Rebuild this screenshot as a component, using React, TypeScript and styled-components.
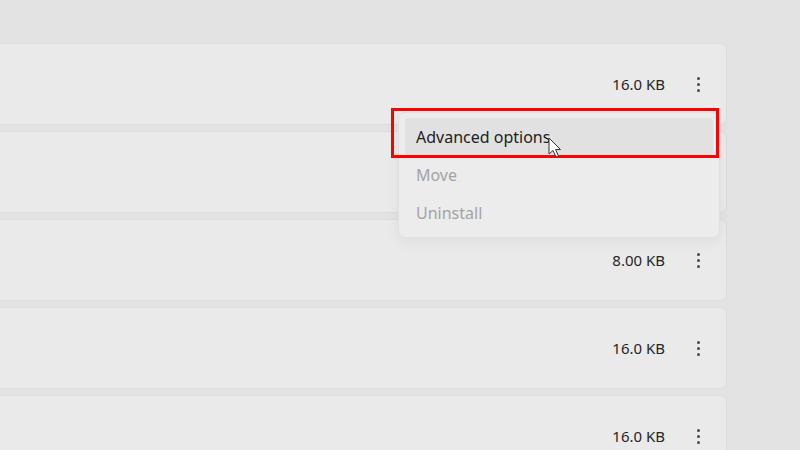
import { createGlobalStyle, styled } from 'styled-components';

const GlobalStyle = createGlobalStyle`
  html, body {
    margin: 0;
    padding: 0;
    background: #e3e3e3;
    font-family: "Noto Sans", "Open Sans", "Liberation Sans", sans-serif;
    overflow: hidden;
  }
`;

const Page = styled.div`
  position: relative;
  width: 800px;
  height: 450px;
  overflow: hidden;
`;

const List = styled.div`
  display: flex;
  flex-direction: column;
  gap: 6px;
  width: 748px;
  margin-left: -21px;
  padding-top: 43px;
`;

const Card = styled.div`
  box-sizing: border-box;
  height: 82px;
  display: flex;
  align-items: center;
  justify-content: flex-end;
  gap: 19px;
  padding-right: 14px;
  background: #eaeaea;
  border: 1px solid #dcdcdc;
  border-radius: 6px;
`;

const Size = styled.span`
  font-size: 15px;
  color: #262626;
`;

const Kebab = styled.button`
  width: 28px;
  height: 28px;
  display: flex;
  flex-direction: column;
  align-items: center;
  justify-content: center;
  gap: 3px;
  padding: 0;
  border: none;
  background: transparent;

  span {
    width: 3px;
    height: 3px;
    border-radius: 50%;
    background: #4a4a4a;
  }
`;

const Menu = styled.div`
  position: absolute;
  left: 398px;
  top: 112px;
  width: 322px;
  box-sizing: border-box;
  padding: 5px 6px;
  background: #ececec;
  border: 1px solid #e0e0e0;
  border-radius: 7px;
  box-shadow: 0 4px 14px rgba(0, 0, 0, 0.06);
  display: flex;
  flex-direction: column;
`;

const MenuItem = styled.div<{ $active?: boolean; $disabled?: boolean }>`
  height: 38px;
  display: flex;
  align-items: center;
  padding-left: 11px;
  border-radius: 4px;
  font-size: 16px;
  color: ${(p) => (p.$disabled ? '#a3a3a3' : '#222222')};
  background: ${(p) => (p.$active ? '#e1e1e1' : 'transparent')};
`;

const Highlight = styled.div`
  position: absolute;
  left: 391px;
  top: 108px;
  width: 328px;
  height: 50px;
  box-sizing: border-box;
  border: 3px solid #ff0000;
`;

const Cursor = styled.svg`
  position: absolute;
  left: 548px;
  top: 137px;
`;

const sizes = ['16.0 KB', '', '8.00 KB', '16.0 KB', '16.0 KB'];

export default function App() {
  return (
    <Page>
      <GlobalStyle />
      <List>
        {sizes.map((s, i) => (
          <Card key={i}>
            {s && (
              <>
                <Size>{s}</Size>
                <Kebab>
                  <span />
                  <span />
                  <span />
                </Kebab>
              </>
            )}
          </Card>
        ))}
      </List>
      <Menu>
        <MenuItem $active>Advanced options</MenuItem>
        <MenuItem $disabled>Move</MenuItem>
        <MenuItem $disabled>Uninstall</MenuItem>
      </Menu>
      <Highlight />
      <Cursor width="14" height="22" viewBox="0 0 14 22">
        <path
          d="M1 1 L1 17 L5 13.5 L8 20 L10.5 19 L7.6 12.6 L12.5 12.5 Z"
          fill="#ffffff"
          stroke="#333333"
          strokeWidth="1"
          strokeLinejoin="round"
        />
      </Cursor>
    </Page>
  );
}
